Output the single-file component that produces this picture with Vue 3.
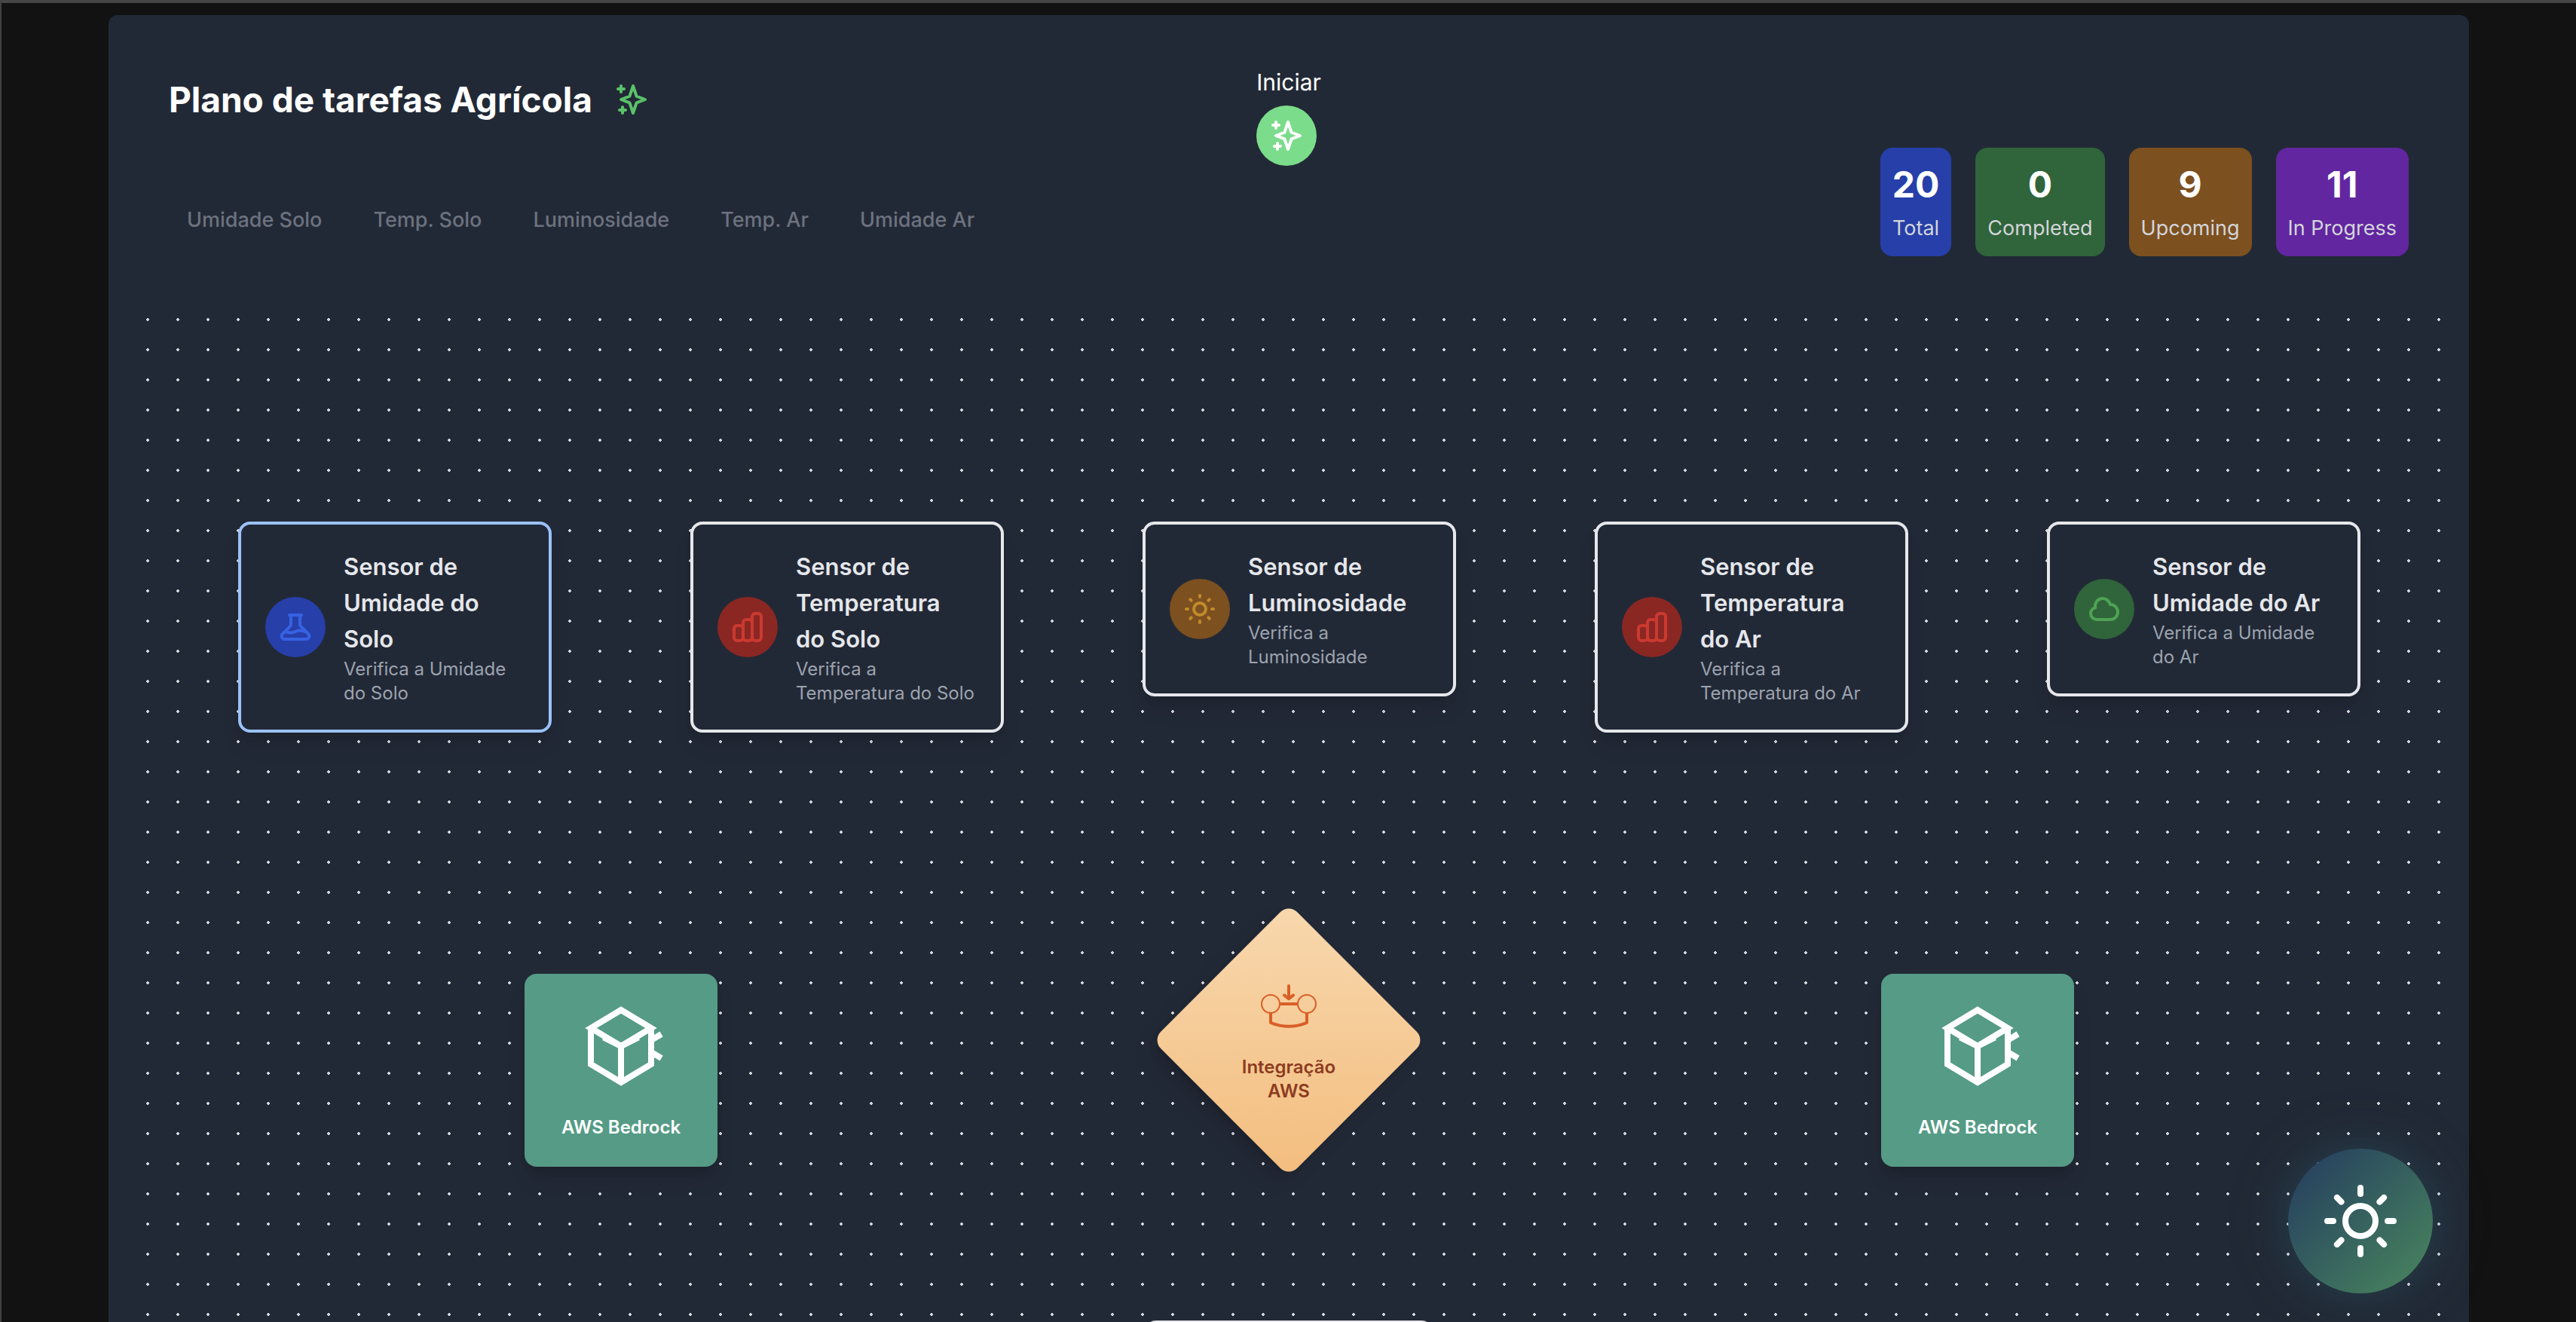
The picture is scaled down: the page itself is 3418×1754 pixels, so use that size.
<script setup>
const tabs = ['Umidade Solo', 'Temp. Solo', 'Luminosidade', 'Temp. Ar', 'Umidade Ar']

const stats = [
  { value: 20, label: 'Total', tone: 'blue' },
  { value: 0, label: 'Completed', tone: 'green' },
  { value: 9, label: 'Upcoming', tone: 'yellow' },
  { value: 11, label: 'In Progress', tone: 'purple' },
]

const icons = {
  sparkles:
    'M5 3v4M3 5h4M6 17v4m-2-2h4m5-16l2.286 6.857L21 12l-5.714 2.143L13 21l-2.286-6.857L5 12l5.714-2.143L13 3z',
  beaker:
    'M19.428 15.428a2 2 0 00-1.022-.547l-2.387-.477a6 6 0 00-3.86.517l-.318.158a6 6 0 01-3.86.517L6.05 15.21a2 2 0 00-1.806.547M8 4h8l-1 1v5.172a2 2 0 00.586 1.414l5 5c1.26 1.26.367 3.414-1.415 3.414H4.828c-1.782 0-2.674-2.154-1.414-3.414l5-5A2 2 0 009 10.172V5L8 4z',
  chart:
    'M9 19v-6a2 2 0 00-2-2H5a2 2 0 00-2 2v6a2 2 0 002 2h2a2 2 0 002-2zm0 0V9a2 2 0 012-2h2a2 2 0 012 2v10m-6 0a2 2 0 002 2h2a2 2 0 002-2m0 0V5a2 2 0 012-2h2a2 2 0 012 2v14a2 2 0 01-2 2h-2a2 2 0 01-2-2z',
  sun: 'M12 3v1m0 16v1m9-9h-1M4 12H3m15.364 6.364l-.707-.707M6.343 6.343l-.707-.707m12.728 0l-.707.707M6.343 17.657l-.707.707M16 12a4 4 0 11-8 0 4 4 0 018 0z',
  cloud:
    'M3 15a4 4 0 004 4h9a5 5 0 10-.1-9.999 5 5 0 10-9.78 2.096A4.001 4.001 0 003 15z',
}

const sensors = [
  { title: 'Sensor de\nUmidade do\nSolo', text: 'Verifica a Umidade\ndo Solo', icon: 'beaker', tone: 'blue', active: true },
  { title: 'Sensor de\nTemperatura\ndo Solo', text: 'Verifica a\nTemperatura do Solo', icon: 'chart', tone: 'red' },
  { title: 'Sensor de\nLuminosidade', text: 'Verifica a\nLuminosidade', icon: 'sun', tone: 'yellow' },
  { title: 'Sensor de\nTemperatura\ndo Ar', text: 'Verifica a\nTemperatura do Ar', icon: 'chart', tone: 'red' },
  { title: 'Sensor de\nUmidade do Ar', text: 'Verifica a Umidade\ndo Ar', icon: 'cloud', tone: 'green' },
]
</script>

<template>
  <div class="page">
    <main class="panel">
      <header class="header">
        <div class="intro">
          <div class="heading">
            <h1>Plano de tarefas Agrícola</h1>
            <svg class="icon spark" viewBox="0 0 24 24"><path :d="icons.sparkles" /></svg>
          </div>
          <nav class="tabs">
            <button v-for="tab in tabs" :key="tab" type="button">{{ tab }}</button>
          </nav>
        </div>

        <div class="start">
          <label for="start-button">Iniciar</label>
          <button id="start-button" type="button">
            <svg class="icon" viewBox="0 0 24 24"><path :d="icons.sparkles" /></svg>
          </button>
        </div>

        <div class="stats">
          <div v-for="s in stats" :key="s.label" class="stat" :class="s.tone">
            <strong>{{ s.value }}</strong>
            <span>{{ s.label }}</span>
          </div>
        </div>
      </header>

      <section class="canvas">
        <div class="sensors">
          <article v-for="s in sensors" :key="s.title" class="sensor" :class="{ active: s.active }">
            <span class="badge" :class="s.tone">
              <svg class="icon" viewBox="0 0 24 24"><path :d="icons[s.icon]" /></svg>
            </span>
            <div>
              <h2>{{ s.title }}</h2>
              <p>{{ s.text }}</p>
            </div>
          </article>
        </div>

        <div class="services">
          <div v-for="n in 2" :key="n" class="bedrock">
            <svg viewBox="0 -1 24 28">
              <path d="M12 2L22 8L12 14L2 8Z" />
              <path d="M2 8V20L12 26L22 20V8M12 14V26" />
              <path d="M6.2 11.1L12 14L17.8 11.1" />
              <path d="M21.9 12.1L25.4 10M21.9 15.9L25.4 18" />
            </svg>
            <span>AWS Bedrock</span>
          </div>
        </div>

        <div class="gateway">
          <div class="diamond"></div>
          <div class="gateway-body">
            <svg viewBox="0 0 24 24">
              <path d="M12 3V7M10.5 6.1L12 7.3L13.5 6.1" />
              <path class="flat" d="M9 9H15M6 12V15M18 12V15" />
              <path d="M6 15.2Q12 17.7 18 15.2" />
              <circle cx="6" cy="9" r="3" />
              <circle cx="18" cy="9" r="3" />
            </svg>
            <span>Integração<br />AWS</span>
          </div>
        </div>

        <div class="next-node"></div>
      </section>
    </main>

    <button class="theme" type="button" aria-label="Alternar tema">
      <svg class="icon" viewBox="0 0 24 24">
        <circle cx="12" cy="12" r="5" />
        <path
          d="M12 1v2M12 21v2M4.22 4.22l1.42 1.42M18.36 18.36l1.42 1.42M1 12h2M21 12h2M4.22 19.78l1.42-1.42M18.36 5.64l1.42-1.42" />
      </svg>
    </button>
  </div>
</template>

<style>
body {
  margin: 0;
  background: #121212;
}
</style>

<style scoped>
.page {
  box-sizing: border-box;
  height: 100vh;
  overflow: hidden;
  padding: 16px 142px 0;
  border-top: 4px solid #464646;
  border-left: 2px solid #414141;
  background: #121212;
  color: #fff;
  font-family: Inter, "Liberation Sans", sans-serif;
  font-size: 30px;
  line-height: 48px;
}

button {
  padding: 0;
  border: 0;
  background: none;
  color: inherit;
  font: inherit;
  cursor: pointer;
}

h1,
h2,
p {
  margin: 0;
}

.icon {
  display: block;
  width: 48px;
  height: 48px;
  fill: none;
  stroke: currentColor;
  stroke-width: 2;
  stroke-linecap: round;
  stroke-linejoin: round;
}

.panel {
  padding: 32px;
  border-radius: 12px;
  background: #222936;
}

.header {
  display: grid;
  grid-template-columns: 1fr auto 1fr;
  align-items: start;
  min-height: 352px;
  box-sizing: border-box;
  padding: 32px 48px 0;
}

.intro {
  padding-top: 16px;
}

.heading {
  display: flex;
  align-items: center;
  gap: 28px;
}

h1 {
  font-size: 46px;
  line-height: 64px;
  font-weight: 700;
}

.spark {
  color: #5ac269;
}

.tabs {
  display: flex;
  gap: 20px;
  margin-top: 108px;
}

.tabs button {
  padding: 0 24px;
  color: #6c727f;
  font-size: 27px;
  line-height: 40px;
  font-weight: 500;
}

.start label {
  display: block;
  line-height: 50px;
}

.start button {
  display: grid;
  place-items: center;
  width: 80px;
  height: 80px;
  margin-top: 6px;
  border-radius: 50%;
  background: #7bdc8b;
}

.stats {
  display: flex;
  justify-content: flex-end;
  gap: 32px;
  margin-top: 112px;
}

.stat {
  display: flex;
  flex-direction: column;
  align-items: center;
  padding: 16px 16px 12px;
  border-radius: 16px;
}

.stat strong {
  font-size: 48px;
  line-height: 66px;
  font-weight: 700;
}

.stat span {
  color: #d3d5da;
  font-size: 27px;
  line-height: 50px;
}

.blue {
  background: #263fa9;
  color: #3662e3;
}

.green {
  background: #30643a;
  color: #4ea354;
}

.yellow {
  background: #7c501f;
  color: #c18b2b;
}

.purple {
  background: #6226a1;
}

.red {
  background: #8a2723;
  color: #cb3931;
}

.stat strong {
  color: #fff;
}

.canvas {
  position: relative;
  box-sizing: border-box;
  min-height: 1600px;
  padding: 288px 20px 0 48px;
  background: radial-gradient(circle, #d3d5da 2px, transparent 2px) 0 0 / 40px 40px;
}

.sensors {
  display: grid;
  grid-template-columns: repeat(5, 1fr);
  align-items: start;
  justify-items: center;
  min-height: 600px;
}

.sensor {
  display: flex;
  align-items: center;
  gap: 24px;
  box-sizing: border-box;
  width: 416px;
  padding: 32px;
  border: 4px solid #e5e7eb;
  border-radius: 16px;
  background: #222936;
  box-shadow: 0 20px 30px -6px rgba(0, 0, 0, 0.1), 0 8px 12px -4px rgba(0, 0, 0, 0.1);
}

.sensor.active {
  border-color: #9bc2f8;
}

.badge {
  display: grid;
  flex: none;
  place-items: center;
  width: 80px;
  height: 80px;
  border-radius: 50%;
}

h2 {
  color: #e5e7eb;
  font-size: 31px;
  line-height: 48px;
  font-weight: 600;
  white-space: pre;
}

p {
  color: #9ca3af;
  font-size: 24px;
  line-height: 32px;
  white-space: pre;
}

.services {
  display: grid;
  grid-template-columns: 2fr 1fr 2fr;
  justify-items: center;
}

.bedrock {
  display: flex;
  flex-direction: column;
  align-items: center;
  justify-content: center;
  gap: 40px;
  width: 256px;
  height: 256px;
  border-radius: 16px;
  background: #559b86;
  box-shadow: 0 20px 30px -6px rgba(0, 0, 0, 0.12), 0 8px 12px -4px rgba(0, 0, 0, 0.12);
  font-size: 24px;
  line-height: 32px;
  font-weight: 600;
}

.bedrock:last-child {
  grid-column: 3;
}

.bedrock svg {
  width: 96px;
  height: 112px;
  overflow: visible;
  fill: none;
  stroke: #fff;
  stroke-width: 2;
}

.gateway {
  position: absolute;
  top: 848px;
  left: 50%;
  width: 256px;
  height: 256px;
  margin-left: -128px;
}

.diamond {
  position: absolute;
  inset: 0;
  border-radius: 16px;
  background: linear-gradient(135deg, #f8d8ae, #f3bd7e);
  box-shadow: 0 20px 30px -6px rgba(0, 0, 0, 0.12), 0 8px 12px -4px rgba(0, 0, 0, 0.12);
  transform: rotate(45deg);
}

.gateway-body {
  position: relative;
  display: flex;
  flex-direction: column;
  align-items: center;
  justify-content: center;
  gap: 8px;
  height: 100%;
  color: #8d3b20;
  font-size: 24px;
  line-height: 32px;
  font-weight: 600;
  text-align: center;
}

.gateway-body svg {
  width: 96px;
  height: 96px;
  fill: none;
  stroke: #d95f27;
  stroke-width: 1;
  stroke-linecap: round;
  stroke-linejoin: round;
}

.gateway-body .flat {
  stroke-linecap: butt;
}

.gateway-body circle {
  stroke-width: 0.5;
}

.next-node {
  position: absolute;
  top: 1348px;
  left: 50%;
  box-sizing: border-box;
  width: 384px;
  height: 160px;
  margin-left: -192px;
  border: 4px solid #e5e7eb;
  border-radius: 16px;
  background: #222936;
}

.theme {
  position: fixed;
  right: 190px;
  bottom: 38px;
  display: grid;
  place-items: center;
  width: 192px;
  height: 192px;
  border-radius: 50%;
  background: linear-gradient(135deg, #233a5f, #4a885e);
  box-shadow: 0 0 60px rgba(59, 130, 190, 0.18), 0 0 100px rgba(60, 140, 80, 0.12);
}

.theme .icon {
  width: 96px;
  height: 96px;
}
</style>
